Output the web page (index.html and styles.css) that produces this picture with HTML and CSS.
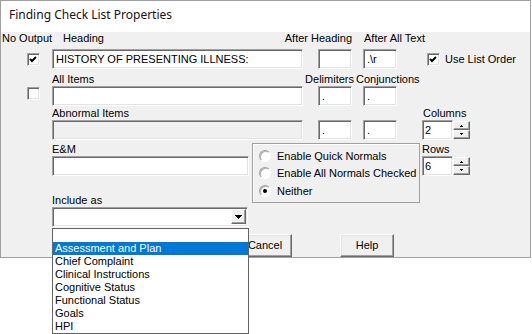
FILE: index.html
```html
<!DOCTYPE html>
<html lang="en">
<head>
    <meta charset="UTF-8">
    <meta name="viewport" content="width=device-width, initial-scale=1.0">
    <title>Finding Check List Properties</title>
    <link rel="stylesheet" href="styles.css">
</head>
<body>
    <div class="window">
        <div class="titlebar">Finding Check List Properties</div>

        <div class="dialog">
            <div class="fields">
                <div class="label top col1 row1 nooutput">No Output</div>
                <div class="label top col2 row1 heading-label">Heading</div>
                <div class="label top after-heading row1">After Heading</div>
                <div class="label top after-all row1">After All Text</div>

                <span class="check checked col1 row2 check-first">
                    <svg width="13" height="13" viewBox="0 0 13 13"><polyline points="3,6 5,8 9,4" fill="none" stroke="#000" stroke-width="2"/></svg>
                </span>
                <div class="edit col2 row2">HISTORY OF PRESENTING ILLNESS:</div>
                <div class="edit col4 row2"></div>
                <div class="edit col6 row2">.\r</div>
                <div class="listorder row2">
                    <span class="check checked">
                        <svg width="13" height="13" viewBox="0 0 13 13"><polyline points="3,6 5,8 9,4" fill="none" stroke="#000" stroke-width="2"/></svg>
                    </span>
                    Use List Order
                </div>

                <div class="label col2 row3">All Items</div>
                <div class="label delim row3">Delimiters</div>
                <div class="label conj row3">Conjunctions</div>

                <span class="check col1 row4 check-second"></span>
                <div class="edit col2 row4"></div>
                <div class="edit col4 row4">.</div>
                <div class="edit col6 row4">.</div>

                <div class="label col2 row5">Abnormal Items</div>
                <div class="label col8 row5 columns-label">Columns</div>

                <div class="edit disabled col2 row6"></div>
                <div class="edit col4 row6">.</div>
                <div class="edit col6 row6">.</div>
                <div class="spin col8 row6">
                    <div class="edit">2</div>
                    <div class="spin-btns">
                        <span class="spin-btn"><span class="arrow-up"></span></span>
                        <span class="spin-btn"><span class="arrow-down"></span></span>
                    </div>
                </div>
            </div>

            <div class="lower">
                <div class="left-col">
                    <div class="label em-label">E&amp;M</div>
                    <div class="edit em-edit"></div>
                    <div class="label include-label">Include as</div>
                    <div class="combo">
                        <div class="combo-btn">
                            <svg width="7" height="4" viewBox="0 0 7 4" shape-rendering="crispEdges"><polygon points="0,0 7,0 3.5,4" fill="#000"/></svg>
                        </div>
                        <div class="droplist">
                            <div class="item"></div>
                            <div class="item selected">Assessment and Plan</div>
                            <div class="item">Chief Complaint</div>
                            <div class="item">Clinical Instructions</div>
                            <div class="item">Cognitive Status</div>
                            <div class="item">Functional Status</div>
                            <div class="item">Goals</div>
                            <div class="item">HPI</div>
                        </div>
                    </div>
                </div>

                <div class="group">
                    <div class="option"><span class="radio"></span>Enable Quick Normals</div>
                    <div class="option"><span class="radio"></span>Enable All Normals Checked</div>
                    <div class="option"><span class="radio on"></span>Neither</div>
                </div>

                <div class="right-col">
                    <div class="label rows-label">Rows</div>
                    <div class="spin">
                        <div class="edit">6</div>
                        <div class="spin-btns">
                            <span class="spin-btn"><span class="arrow-up"></span></span>
                            <span class="spin-btn"><span class="arrow-down"></span></span>
                        </div>
                    </div>
                </div>
            </div>

            <div class="buttons">
                <div class="btn">Cancel</div>
                <div class="btn">Help</div>
            </div>
        </div>
    </div>
</body>
</html>
```

FILE: styles.css
```css
html {
    height: 100%;
}
body {
    margin: 0;
    min-height: 100%;
    background-color: #fff;
    font-family: "Liberation Sans", Arial, sans-serif;
    font-size: 11px;
    color: #000;
}
.window {
    position: relative;
    width: 531px;
    box-sizing: border-box;
    border: 1px solid #a0a0a0;
}
.titlebar {
    height: 31px;
    padding-left: 8px;
    font-family: "Noto Sans", "Open Sans", sans-serif;
    font-size: 12px;
    line-height: 28px;
    background-color: #fff;
    color: #1a1020;
}
.dialog {
    height: 225px;
    background-color: #f0f0f0;
}

/* top grid of edits */
.fields {
    display: grid;
    grid-template-columns: 51px 251px 15px 34px 11px 34px 25px 49px 1fr;
    grid-template-rows: 17px 20px 17px 20px 14px 20px;
}
.label {
    line-height: 13px;
    white-space: nowrap;
    align-self: end;
}
.label.top {
    align-self: start;
}
.col1 { grid-column: 1; }
.col2 { grid-column: 2; }
.col4 { grid-column: 4; }
.col6 { grid-column: 6; }
.col8 { grid-column: 8; }
.row1 { grid-row: 1; }
.row2 { grid-row: 2; }
.row3 { grid-row: 3; }
.row4 { grid-row: 4; }
.row5 { grid-row: 5; }
.row6 { grid-row: 6; }

.nooutput {
    padding-left: 1px;
}
.heading-label {
    padding-left: 11px;
}
.after-heading {
    grid-column: 2 / 5;
    text-align: right;
}
.after-all {
    grid-column: 6 / -1;
    padding-left: 1px;
}
.delim {
    grid-column: 2 / 5;
    text-align: right;
    margin-right: -2px;
}
.conj {
    grid-column: 5 / -1;
    padding-left: 4px;
}
.columns-label {
    padding-left: 1px;
}

.edit {
    box-sizing: border-box;
    height: 20px;
    padding: 0 3px;
    line-height: 18px;
    white-space: nowrap;
    overflow: hidden;
    background-color: #fff;
    border: 1px solid;
    border-color: #a0a0a0 #fff #fff #a0a0a0;
    box-shadow: inset 1px 1px 0 #696969, inset -1px -1px 0 #e3e3e3;
}
.edit.disabled {
    background-color: #f0f0f0;
}

.check {
    box-sizing: border-box;
    width: 13px;
    height: 13px;
    background-color: #fff;
    border: 1px solid;
    border-color: #a0a0a0 #fff #fff #a0a0a0;
    box-shadow: inset 1px 1px 0 #696969, inset -1px -1px 0 #e3e3e3;
    display: flex;
}
.check svg {
    margin: -1px;
}
.check-first {
    align-self: start;
    margin: 4px 0 0 26px;
}
.check-second {
    align-self: start;
    margin: 1px 0 0 26px;
}
.listorder {
    grid-column: 8 / 10;
    align-self: center;
    display: flex;
    align-items: center;
    gap: 5px;
    margin-left: 5px;
    white-space: nowrap;
}

.spin {
    display: flex;
}
.spin .edit {
    width: 31px;
    padding: 0 2px;
}
.spin-btns {
    display: flex;
    flex-direction: column;
    padding: 1px 0;
    width: 17px;
}
.spin-btn {
    box-sizing: border-box;
    height: 9px;
    display: flex;
    align-items: center;
    justify-content: center;
    background-color: #f0f0f0;
    border: 1px solid;
    border-color: #fff #696969 #696969 #fff;
    box-shadow: inset -1px -1px 0 #a0a0a0;
}
.arrow-up,
.arrow-down {
    width: 1px;
    height: 1px;
    background-color: #000;
}
.arrow-up {
    margin-top: -1px;
    box-shadow: -1px 1px #000, 0 1px #000, 1px 1px #000;
}
.arrow-down {
    box-shadow: -1px -1px #000, 0 -1px #000, 1px -1px #000;
}

/* lower part */
.lower {
    display: flex;
    align-items: flex-start;
}
.left-col {
    width: 197px;
    margin-left: 51px;
}
.em-label {
    margin-top: 3px;
}
.include-label {
    margin-top: 18px;
}
.combo {
    position: relative;
    z-index: 5;
    width: 196px;
    box-sizing: border-box;
    height: 20px;
    padding: 2px;
    display: flex;
    justify-content: flex-end;
    background-color: #fff;
    border: 1px solid;
    border-color: #a0a0a0 #fff #fff #a0a0a0;
    box-shadow: inset 1px 1px 0 #696969, inset -1px -1px 0 #e3e3e3;
}
.combo-btn {
    box-sizing: border-box;
    width: 15px;
    height: 15px;
    margin: -1px -1px 0 0;
    display: flex;
    align-items: center;
    justify-content: center;
    background-color: #f0f0f0;
    border: 1px solid;
    border-color: #fff #696969 #696969 #fff;
    box-shadow: inset -1px -1px 0 #a0a0a0;
}
.droplist {
    position: absolute;
    left: -1px;
    top: 20px;
    width: 197px;
    height: 106px;
    box-sizing: border-box;
    border: 1px solid #646464;
    background-color: #fff;
}
.item {
    height: 13px;
    line-height: 13px;
    padding-left: 2px;
    white-space: nowrap;
}
.item.selected {
    background-color: #0078d7;
    color: #fff;
}

.group {
    box-sizing: border-box;
    width: 168px;
    height: 60px;
    margin: 3px 0 0 3px;
    padding: 3px 0 0 6px;
    border: 1px solid #a0a0a0;
    box-shadow: inset 1px 1px 0 #fff;
}
.option {
    height: 17.5px;
    display: flex;
    align-items: center;
    gap: 6px;
    white-space: nowrap;
}
.radio {
    box-sizing: border-box;
    width: 12px;
    height: 12px;
    border-radius: 50%;
    background-color: #fff;
    border: 1px solid;
    border-color: #a0a0a0 #fff #fff #a0a0a0;
    box-shadow: inset 1px 1px 0 #b4b4b4;
    display: flex;
    align-items: center;
    justify-content: center;
}
.radio.on::after {
    content: '';
    width: 4px;
    height: 4px;
    border-radius: 50%;
    background-color: #000;
}

.right-col {
    margin-left: 2px;
}
.rows-label {
    margin-top: 3px;
}

.buttons {
    display: flex;
    gap: 48px;
    margin: 7px 0 0 237px;
}
.btn {
    box-sizing: border-box;
    width: 54px;
    height: 23px;
    line-height: 21px;
    text-align: center;
    background-color: #f0f0f0;
    border: 1px solid;
    border-color: #fff #696969 #696969 #fff;
    box-shadow: inset -1px -1px 0 #a0a0a0, inset 1px 1px 0 #e3e3e3;
}
```
